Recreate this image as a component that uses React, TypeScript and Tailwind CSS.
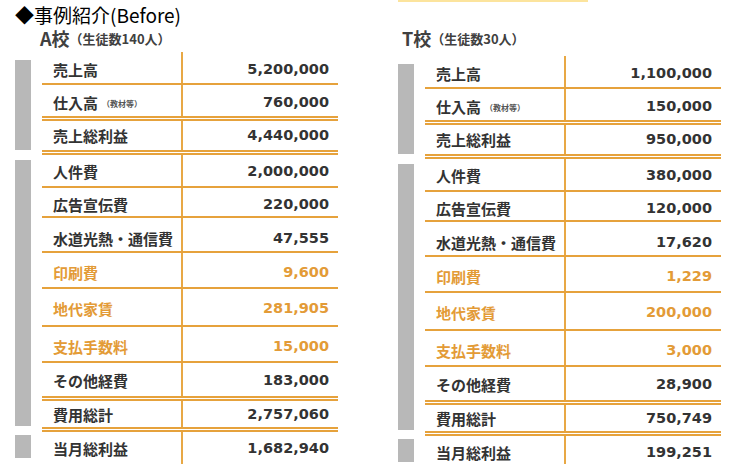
type Row = {
  label: string
  note?: string
  a: string
  t: string
  h: string
  pad: string
  line: "single" | "double" | "none"
  orange?: boolean
  light?: boolean
}

const rows: Row[] = [
  { label: "売上高", a: "5,200,000", t: "1,100,000", h: "h-[33px]", pad: "pt-[3px]", line: "single" },
  { label: "仕入高", note: "（教材等）", a: "760,000", t: "150,000", h: "h-[36px]", pad: "pt-[3px]", line: "double" },
  { label: "売上総利益", a: "4,440,000", t: "950,000", h: "h-[34px]", pad: "pt-0", line: "double" },
  { label: "人件費", a: "2,000,000", t: "380,000", h: "h-[33px]", pad: "pt-[1px]", line: "single" },
  { label: "広告宣伝費", a: "220,000", t: "120,000", h: "h-[30px]", pad: "pt-[4px]", line: "single" },
  { label: "水道光熱・通信費", a: "47,555", t: "17,620", h: "h-[35px]", pad: "pt-[7px]", line: "single" },
  { label: "印刷費", a: "9,600", t: "1,229", h: "h-[36px]", pad: "pt-[4px]", line: "single", orange: true },
  { label: "地代家賃", a: "281,905", t: "200,000", h: "h-[38px]", pad: "pt-[2px]", line: "single", orange: true },
  { label: "支払手数料", a: "15,000", t: "3,000", h: "h-[36px]", pad: "pt-[5px]", line: "single", orange: true },
  { label: "その他経費", a: "183,000", t: "28,900", h: "h-[38px]", pad: "pt-[2px]", line: "double" },
  { label: "費用総計", a: "2,757,060", t: "750,749", h: "h-[31px]", pad: "pt-[1px]", line: "double", light: true },
  { label: "当月総利益", a: "1,682,940", t: "199,251", h: "h-[32px]", pad: "pt-0", line: "none" },
]

function lineClass(line: Row["line"]) {
  if (line === "single") return "border-b-2 border-[#e6a23c]"
  if (line === "double") return "border-b-[5px] border-double border-[#e6a23c]"
  return ""
}

function SchoolTable({
  name,
  students,
  which,
  indent,
  offset,
}: {
  name: string
  students: string
  which: "a" | "t"
  indent: string
  offset: string
}) {
  return (
    <div className="flex flex-col">
      <div className={`flex h-[26px] items-center pb-[4px] pt-[2px] text-[#404040] ${indent}`}>
        <span className="text-[18px] font-bold leading-none">{name}</span>
        <span className="text-[13px] font-bold leading-none">（生徒数{students}人）</span>
      </div>
      <div className={`flex gap-[11px] ${offset}`}>
        {/* grey group bars */}
        <div className="flex w-[16px] flex-col">
          <div className="mt-[8px] h-[90px] bg-[#b8b8b8]" />
          <div className="mt-[10px] h-[266px] bg-[#b8b8b8]" />
          <div className="mt-[9px] h-[23px] bg-[#b8b8b8]" />
        </div>
        <div className="flex w-[296px] flex-col">
          {rows.map((r) => (
            <div key={r.label} className={`flex ${r.h} ${lineClass(r.line)}`}>
              <div
                className={`flex w-[139px] items-center pl-[11px] ${r.pad} text-[15px] leading-none ${
                  r.light ? "font-semibold" : "font-bold"
                } ${r.orange ? "text-[#e39b37]" : "text-[#333333]"}`}
              >
                {r.label}
                {r.note && <span className="ml-[4px] mt-[3px] text-[8px] font-bold text-[#555555]">{r.note}</span>}
              </div>
              <div
                className={`flex flex-1 items-center justify-end border-l-2 border-[#e8a845] pr-[9px] ${r.pad} font-['DejaVu_Sans',sans-serif] text-[14.5px] font-bold leading-none ${
                  r.orange ? "text-[#e39b37]" : "text-[#333333]"
                }`}
              >
                {which === "a" ? r.a : r.t}
              </div>
            </div>
          ))}
        </div>
      </div>
    </div>
  )
}

export default function App() {
  return (
    <div className="h-[464px] w-[737px] overflow-hidden bg-white font-['Noto_Sans_CJK_JP',sans-serif]">
      <div className="flex items-start">
        <div className="flex h-[26px] w-[398px] flex-none items-center pl-[15px] pt-[3px] text-[19px] leading-none text-black">
          ◆事例紹介(Before)
        </div>
        <div className="h-[2px] w-[190px] bg-[#fce49d]" />
      </div>
      <div className="flex gap-[60px] pl-[15px]">
        <SchoolTable name="A校" students="140" which="a" indent="pl-[25px]" offset="" />
        <SchoolTable name="T校" students="30" which="t" indent="pl-[4px]" offset="mt-[4px]" />
      </div>
    </div>
  )
}
